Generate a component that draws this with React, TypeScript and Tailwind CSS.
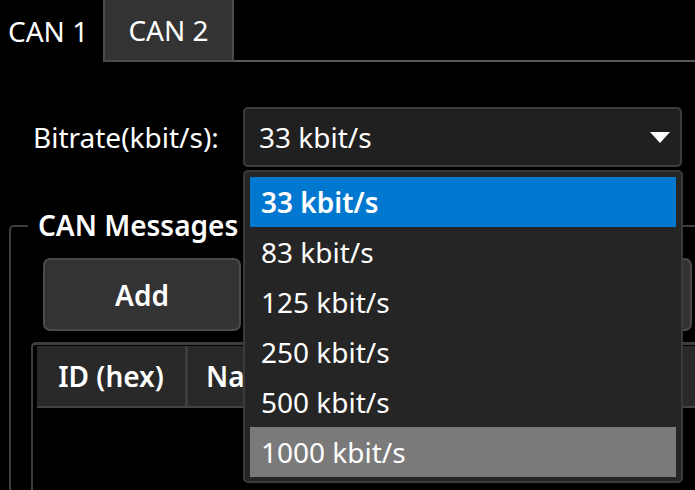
import React from 'react'

const rates = ['33 kbit/s', '83 kbit/s', '125 kbit/s', '250 kbit/s', '500 kbit/s', '1000 kbit/s']

export default function App() {
  const selected = 0
  const hovered = 5

  return (
    <div
      className="relative w-[695px] h-[490px] overflow-hidden bg-black text-white text-[28px]"
      style={{ fontFamily: '"Segoe UI", "Noto Sans", "Open Sans", sans-serif' }}
    >
      {/* tab strip */}
      <div className="flex h-[62px]">
        <div className="w-[103px] flex items-center pl-[8px]">CAN 1</div>
        <div className="w-[131px] flex items-center justify-center bg-[#333333] border-x-2 border-b-2 border-[#4b4b4b]">
          CAN 2
        </div>
        <div className="flex-1 border-b-2 border-[#5a5a5a]" />
      </div>

      {/* bitrate row */}
      <div className="flex items-center mt-[45px] h-[60px]">
        <div className="w-[243px] pl-[33px]">Bitrate(kbit/s):</div>
        <div className="w-[439px] h-full flex items-center justify-between pl-[14px] pr-[10px] bg-[#202020] border-2 border-[#3c3c3c] rounded-[5px]">
          <span>33 kbit/s</span>
          <svg width="20" height="11" viewBox="0 0 20 11">
            <path d="M0 0 L20 0 L10 11 Z" fill="#fff" />
          </svg>
        </div>
      </div>

      {/* CAN messages group */}
      <div className="relative ml-[9px] mt-[58px] w-[720px] h-[300px] border-t-2 border-l-2 border-[#3e3e3e] rounded-tl-[5px]">
        <div className="absolute -top-[20px] left-[17px] px-[10px] bg-black font-semibold leading-[36px]">
          CAN Messages
        </div>
        <div className="flex gap-[26px] pl-[32px] pt-[31px]">
          <button className="w-[198px] h-[73px] bg-[#333333] border-2 border-[#4a4a4a] rounded-[7px] font-semibold">Add</button>
          <button className="w-[425px] h-[73px] bg-[#333333] border-2 border-[#4a4a4a] rounded-[7px] font-semibold">Remove</button>
        </div>
        <div className="ml-[20px] mt-[11px] border-t-[3px] border-l-2 border-[#3e3e3e] rounded-tl-[5px] h-[200px] pl-[4px] pt-[1px]">
          <div className="flex h-[62px] border-b-2 border-[#444444]">
            <div className="w-[148px] flex items-center justify-center bg-[#292929] font-semibold">ID (hex)</div>
            <div className="w-[3px] bg-[#3c3c3c]" />
            <div className="w-[520px] flex items-center pl-[18px] bg-[#292929] font-semibold">Name</div>
          </div>
        </div>
      </div>

      {/* open dropdown */}
      <div className="absolute left-[243px] top-[170px] w-[440px] h-[313px] p-[5px] bg-[#252525] border-2 border-[#3a3a3a] rounded-[5px]">
        {rates.map((r, i) => (
          <div
            key={r}
            className={
              'h-[50px] flex items-center pl-[11px] ' +
              (i === selected ? 'bg-[#0078d0] font-semibold' : i === hovered ? 'bg-[#7a7a7a]' : '')
            }
          >
            {r}
          </div>
        ))}
      </div>
    </div>
  )
}
